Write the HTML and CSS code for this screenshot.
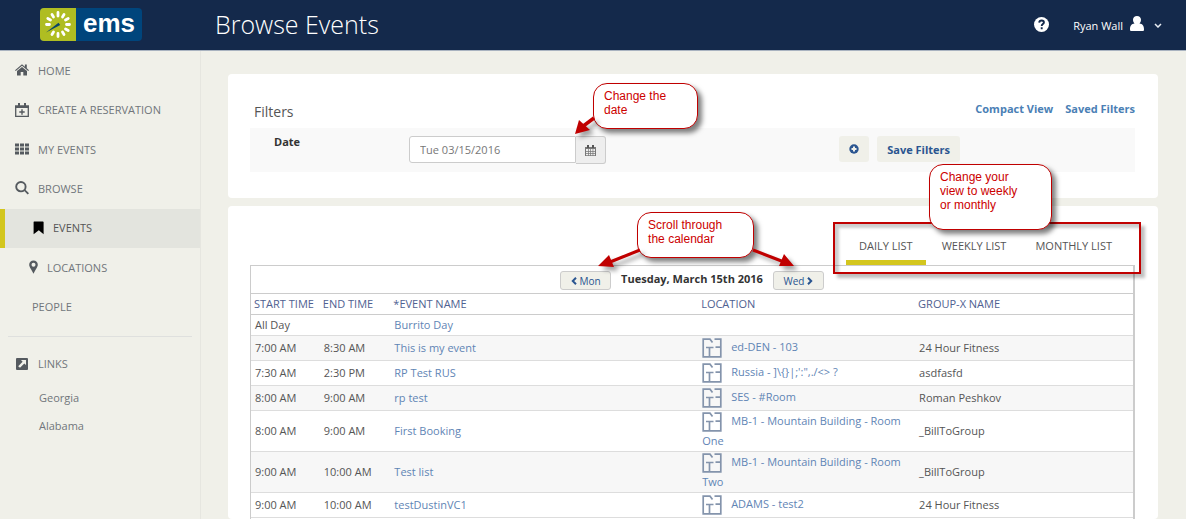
FILE: index.html
```html
<!DOCTYPE html>
<html lang="en">
<head>
<meta charset="utf-8">
<title>Browse Events</title>
<link rel="stylesheet" href="styles.css">
</head>
<body>
<svg class="defs" aria-hidden="true">
  <symbol id="plan" viewBox="0 0 20 20"><path d="M10.500 4.500L8 1.200H1.200V18.800H18.800V1.200H12.500M4 9.500H11.500M7.500 9.500V18.800M13.500 9.200H18.800" fill="none" stroke="#8494ac" stroke-width="1.700"/></symbol>
</svg>
<header class="topbar">
  <div class="logo">
    <svg class="logo-mark" viewBox="0 0 36 33" aria-hidden="true">
      <g stroke="#fff" stroke-width="2.800" stroke-linecap="round">
        <path d="M18 4.500V8M18 25.500V28.500M6.500 16.500H9.500M26.500 16.500H29.500M12 6.500L13.500 9M24 6.500L22.500 9M12 26.500L13.500 24M24 26.500L22.500 24M7.800 10.500L10.500 12M28.200 10.500L25.500 12M28.200 22.500L25.500 21"/>
      </g>
      <path d="M6 24.500L18.500 14.800L20.200 17Z" fill="#0a4468"/>
    </svg>
    <span class="logo-text">ems</span>
  </div>
  <h1 class="title">Browse Events</h1>
  <div class="account">
    <button class="plain" aria-label="Help">
      <svg width="15" height="15" viewBox="0 0 15 15"><circle cx="7.500" cy="7.500" r="7.500" fill="#fff"/><path d="M5.200 5.600C5.300 4.100 6.300 3.500 7.600 3.500C9 3.500 9.900 4.300 9.900 5.400C9.900 7 7.700 7 7.700 8.900M7.700 10.200V12.200" fill="none" stroke="#14294b" stroke-width="1.900"/></svg>
    </button>
    <button class="plain user">Ryan Wall
      <svg class="person" width="14" height="15" viewBox="0 0 14 15"><path d="M3 3.800C3 1.500 4.700 0 7 0S11 1.500 11 3.800C11 5.500 10.200 6.900 9.500 7.500C12.500 8 14 9.500 14 13.500C14 14.500 13.500 15 12.500 15H1.500C.5 15 0 14.500 0 13.500C0 9.500 1.500 8 4.500 7.500C3.800 6.900 3 5.500 3 3.800Z" fill="#fff"/></svg>
      <svg class="caret" width="8" height="5" viewBox="0 0 8 5"><path d="M1 1L4 4L7 1" fill="none" stroke="#e8ecf2" stroke-width="1.500"/></svg>
    </button>
  </div>
</header>
<div class="shell">
  <nav class="sidebar">
    <ul class="menu">
      <li><a href="#"><svg class="ico" viewBox="0 0 14 14"><path d="M7 1.200L0 7.200L.8 8L7 2.800L13.200 8L14 7.200L11.800 5.300V1.600H9.900V3.700ZM2 8V12.600H5.700V9H8.300V12.600H12V8L7 3.900Z"/></svg>HOME</a></li>
      <li><a href="#"><svg class="ico" viewBox="0 0 14 14"><path d="M.7 3.200H13.300V13.300H.7Z" fill="none" stroke="#555a5f" stroke-width="1.300"/><path d="M0 2.500H14V5H0ZM3 0H5V3H3ZM9 0H11V3H9ZM4.300 8.300H9.700V9.700H4.300ZM6.300 6.300H7.700V11.700H6.300Z"/></svg>CREATE A RESERVATION</a></li>
      <li><a href="#"><svg class="ico" viewBox="0 0 14 14"><path d="M0 1.500H4V4.500H0ZM5 1.500H9V4.500H5ZM10 1.500H14V4.500H10ZM0 5.500H4V8.500H0ZM5 5.500H9V8.500H5ZM10 5.500H14V8.500H10ZM0 9.500H4V12.500H0ZM5 9.500H9V12.500H5ZM10 9.500H14V12.500H10Z"/></svg>MY EVENTS</a></li>
      <li><a href="#"><svg class="ico" viewBox="0 0 14 14"><circle cx="5.900" cy="5.700" r="4.700" fill="none" stroke="#555a5f" stroke-width="1.900"/><path d="M9 9.800L10.200 8.600L14 12.200L12.700 13.500Z"/></svg>BROWSE</a></li>
      <li class="sub active"><a href="#"><svg class="ico ico-sm" viewBox="0 0 11 14"><path d="M1 .5H10L10.600 1V13.200L5.800 9.200L.6 13.200V1Z"/></svg>EVENTS</a></li>
      <li class="sub pin"><a href="#"><svg class="ico ico-xs" viewBox="0 0 9 14"><path d="M4.500 .5C2 .5 .2 2.300 .2 4.800C.2 6.500 1 7.200 4.500 13.700C8 7.200 8.800 6.500 8.800 4.800C8.800 2.300 7 .5 4.500 .5ZM4.500 2.700A2 2 0 1 1 4.500 6.700A2 2 0 1 1 4.500 2.700Z" fill-rule="evenodd"/></svg>LOCATIONS</a></li>
      <li class="sub"><a href="#">PEOPLE</a></li>
    </ul>
    <div class="links">
      <h2 class="links-head"><svg class="ico" viewBox="0 0 14 14"><path d="M2 1H12Q13 1 13 2V12Q13 13 12 13H2Q1 13 1 12V2Q1 1 2 1Z"/><path d="M6 3H11V8L9.300 6.400L5 10.800L3.200 9.200L7.600 4.700Z" fill="#f0f0e9"/></svg>LINKS</h2>
      <a href="#">Georgia</a>
      <a href="#">Alabama</a>
    </div>
  </nav>
  <main class="content">
    <section class="card filters">
      <div class="filters-head">
        <h2>Filters</h2>
        <div class="views"><a href="#">Compact View</a><a href="#">Saved Filters</a></div>
      </div>
      <div class="filter-row">
        <label for="date">Date</label>
        <div class="date-group">
          <input id="date" type="text" value="Tue 03/15/2016">
          <button class="cal" aria-label="Pick a date"><svg width="11" height="11" viewBox="0 0 11 11"><path d="M0 2H11V11H0Z" fill="#777"/><path d="M2 0H4V3H2ZM7 0H9V3H7Z" fill="#555"/><path d="M1 4H3V6H1ZM3.700 4H5.300V6H3.700ZM6 4H7.600V6H6ZM8.300 4H10V6H8.300ZM1 6.700H3V8.200H1ZM3.700 6.700H5.300V8.200H3.700ZM6 6.700H7.600V8.200H6ZM8.300 6.700H10V8.200H8.300ZM1 9H3V10.200H1ZM3.700 9H5.300V10.200H3.700ZM6 9H7.600V10.200H6ZM8.300 9H10V10.200H8.300Z" fill="#eee"/></svg></button>
          <svg class="arrow date-arrow" viewBox="0 0 30 30"><path d="M24 9L12 18" stroke="#c00000" stroke-width="3.500"/><path d="M5 25L9 11L20 21Z" fill="#c00000"/></svg>
          <div class="callout date-note">Change the<br>date</div>
        </div>
        <div class="actions">
          <button class="btn" aria-label="Add filter"><svg width="10" height="10" viewBox="0 0 10 10"><circle cx="5" cy="5" r="4.700" fill="#2a5590"/><path d="M5 2.500V7.500M2.500 5H7.500" stroke="#f0f0e9" stroke-width="2"/></svg></button>
          <button class="btn">Save Filters</button>
        </div>
      </div>
    </section>
    <section class="card results">
      <div class="tabs" role="tablist">
        <button class="tab on" role="tab" aria-selected="true">DAILY LIST</button>
        <button class="tab" role="tab">WEEKLY LIST</button>
        <button class="tab" role="tab">MONTHLY LIST</button>
        <div class="frame"></div>
        <div class="callout view-note">Change your<br>view to weekly<br>or monthly</div>
      </div>
      <div class="grid-box">
        <div class="pager-bar">
          <div class="pager">
            <button class="day"><svg width="6" height="8" viewBox="0 0 6 8"><path d="M5 .8L1.800 4L5 7.200" fill="none" stroke="#2a5590" stroke-width="2"/></svg>Mon</button>
            <strong>Tuesday, March 15th 2016</strong>
            <button class="day">Wed<svg width="6" height="8" viewBox="0 0 6 8"><path d="M1 .8L4.200 4L1 7.200" fill="none" stroke="#2a5590" stroke-width="2"/></svg></button>
            <svg class="arrow pager-arrows" viewBox="0 0 266 70"><path d="M80 45L50 57M193 45L224 57" stroke="#c00000" stroke-width="3"/><path d="M38 61L49 50L54 62ZM234 61L224 49L219 61Z" fill="#c00000"/></svg>
            <div class="callout pager-note">Scroll through<br>the calendar</div>
          </div>
        </div>
        <table class="events">
          <colgroup><col class="c-start"><col class="c-end"><col class="c-event"><col class="c-loc"><col class="c-group"></colgroup>
          <thead><tr><th>START TIME</th><th>END TIME</th><th>*EVENT NAME</th><th>LOCATION</th><th>GROUP-X NAME</th></tr></thead>
          <tbody>
            <tr class="allday"><td>All Day</td><td></td><td><a href="#">Burrito Day</a></td><td></td><td></td></tr>
            <tr><td>7:00 AM</td><td>8:30 AM</td><td><a href="#">This is my event</a></td><td class="loc"><svg class="plan"><use href="#plan"/></svg><a href="#">ed-DEN - 103</a></td><td>24 Hour Fitness</td></tr>
            <tr><td>7:30 AM</td><td>2:30 PM</td><td><a href="#">RP Test RUS</a></td><td class="loc"><svg class="plan"><use href="#plan"/></svg><a href="#">Russia - ]\{}|;':",./&lt;&gt; ?</a></td><td>asdfasfd</td></tr>
            <tr><td>8:00 AM</td><td>9:00 AM</td><td><a href="#">rp test</a></td><td class="loc"><svg class="plan"><use href="#plan"/></svg><a href="#">SES - #Room</a></td><td>Roman Peshkov</td></tr>
            <tr><td>8:00 AM</td><td>9:00 AM</td><td><a href="#">First Booking</a></td><td class="loc"><svg class="plan"><use href="#plan"/></svg><a href="#">MB-1 - Mountain Building - Room One</a></td><td>_BillToGroup</td></tr>
            <tr><td>9:00 AM</td><td>10:00 AM</td><td><a href="#">Test list</a></td><td class="loc"><svg class="plan"><use href="#plan"/></svg><a href="#">MB-1 - Mountain Building - Room Two</a></td><td>_BillToGroup</td></tr>
            <tr><td>9:00 AM</td><td>10:00 AM</td><td><a href="#">testDustinVC1</a></td><td class="loc"><svg class="plan"><use href="#plan"/></svg><a href="#">ADAMS - test2</a></td><td>24 Hour Fitness</td></tr>
          </tbody>
        </table>
      </div>
    </section>
  </main>
</div>
</body>
</html>
```
FILE: styles.css
```css
* { box-sizing: border-box; }
body {
  margin: 0;
  min-height: 100vh;
  display: flex;
  flex-direction: column;
  background: #f0f0e9;
  color: #555;
  font-family: "Open Sans", "Noto Sans", sans-serif;
  font-size: 11px;
}
button, input { font: inherit; color: inherit; margin: 0; }
button { cursor: pointer; }
a { text-decoration: none; color: inherit; }
h1, h2, ul { margin: 0; padding: 0; font-weight: 400; list-style: none; }
.defs { position: absolute; width: 0; height: 0; }

.topbar {
  display: flex;
  align-items: center;
  height: 51px;
  padding: 0 24px 1px 40px;
  background: #14294b;
  border-bottom: 1px solid #a9b3c0;
  color: #fff;
}
.logo {
  display: flex;
  width: 102px;
  height: 33px;
  margin-right: 73px;
  border-radius: 4px;
  overflow: hidden;
  background: #00457c;
}
.logo-mark { width: 36px; height: 33px; background: #afbd22; }
.logo-text {
  flex: 1;
  text-align: center;
  font: bold 26px/31px "Liberation Sans", Arial, sans-serif;
}
.title { font-size: 25px; font-weight: 300; line-height: 33px; }
.account { display: flex; align-items: center; gap: 24px; margin-left: auto; }
.plain { display: flex; align-items: center; padding: 0; border: 0; background: none; color: #fff; }
.user { gap: 7px; padding-top: 1px; }
.person { margin-bottom: 3px; }
.caret { margin-left: 3px; }

.shell { flex: 1; display: flex; }
.sidebar { flex: 0 0 201px; border-right: 1px solid #e6e6e0; color: #71767b; }
.menu { display: grid; grid-auto-rows: 1fr; height: 276px; }
.menu a { display: flex; align-items: center; height: 100%; padding: 0 0 1px 15px; }
.ico { width: 14px; height: 14px; margin-right: 9px; fill: #555a5f; }
.ico-sm { width: 11px; }
.ico-xs { width: 9px; }
.menu .sub a { padding-left: 32px; }
.menu .pin a { padding-left: 29px; }
.menu .active { background: #e3e4de; border-left: 5px solid #d3c61e; color: #555; }
.menu .active a { padding-left: 28px; }
.active .ico { fill: #000; }
.links {
  display: flex;
  flex-direction: column;
  gap: 12px;
  margin: 9px 8px 0;
  padding: 19px 7px 0;
  border-top: 1px solid #dfe0de;
  line-height: 16px;
}
.links-head { display: flex; align-items: center; margin-bottom: 6px; font-size: 11px; }
.links a { padding-left: 24px; }

.content { flex: 1; min-width: 0; display: flex; flex-direction: column; gap: 8px; padding: 23px 28px 0 27px; }
.card { background: #fff; border-radius: 4px; padding: 0 23px 0 22px; }
.filters { padding-top: 20px; padding-bottom: 26px; }
.filters-head { display: flex; justify-content: space-between; align-items: center; height: 34px; padding-left: 4px; }
.filters-head h2 { font-size: 14px; }
.views { display: flex; gap: 12px; margin-top: -6px; color: #4a80b5; font-weight: 700; }
.filter-row { display: flex; background: #f9f9f9; height: 44px; padding: 8px 175px 0 24px; }
.filter-row label { width: 135px; color: #333; font-weight: 700; line-height: 12px; }
.date-group { position: relative; display: flex; width: 197px; height: 28px; }
.date-group input {
  width: 167px;
  height: 27px;
  padding: 0 10px;
  border: 1px solid #ccc;
  border-radius: 3px 0 0 3px;
  background: #fff;
  color: #777;
}
.cal {
  flex: 1;
  display: grid;
  place-items: center;
  padding: 0;
  border: 1px solid #ccc;
  border-left: 0;
  border-radius: 0 3px 3px 0;
  background: #eee;
}
.actions { display: flex; gap: 8px; margin-left: auto; }
.btn {
  display: grid;
  place-items: center;
  height: 26px;
  padding: 0 10px;
  border: 0;
  border-radius: 3px;
  background: #f0f0e9;
  color: #2a5590;
  font-weight: 700;
}

.results { flex: 1; display: flex; flex-direction: column; padding-top: 20px; }
.tabs { position: relative; display: flex; gap: 3px; align-self: flex-end; margin-right: 10px; height: 39px; }
.tab { padding: 5px 13px 0; border: 0; border-bottom: 5px solid transparent; background: none; }
.tab.on { border-color: #d3c61e; }
.grid-box { flex: 1; border: 1px solid #ccc; border-width: 1px 2px 0 1px; }
.pager-bar { display: flex; justify-content: center; height: 27px; padding-top: 5px; }
.pager { position: relative; display: flex; gap: 10px; }
.pager strong { color: #333; font-weight: 700; line-height: 16px; }
.day {
  display: flex;
  align-items: center;
  justify-content: center;
  gap: 3px;
  width: 51px;
  height: 19px;
  padding: 0;
  border: 1px solid #ccc;
  border-radius: 3px;
  background: #f0f0e9;
  color: #2a5590;
  font-size: 10px;
}
.events { width: 100%; table-layout: fixed; border-collapse: collapse; line-height: 16px; border-top: 1px solid #ccc; }
.c-start { width: 7.8%; }
.c-end { width: 8%; }
.c-event { width: 34.9%; }
.c-loc { width: 24.6%; }
.events th { height: 21px; padding: 0 3px; border-bottom: 1px solid #ccc; color: #4f6191; font-weight: 400; text-align: left; white-space: nowrap; }
.events td { height: 25px; padding: 0 4px; border-bottom: 1px solid #ddd; }
.events .allday td { height: 21px; }
.events tbody tr:nth-child(even) { background: #f7f7f7; }
.events a { color: #5f85b5; }
.events .loc { padding: 1px 4px; line-height: 18px; }
.plan { width: 20px; height: 20px; margin-right: 9px; vertical-align: -7px; }

.callout {
  position: absolute;
  z-index: 2;
  padding: 5px 10px;
  border: 1px solid #c00000;
  border-radius: 14px;
  background: #fff;
  box-shadow: 4px 4px 5px rgba(0, 0, 0, .5);
  color: #c00;
  font: 12px/14px "Liberation Sans", Arial, sans-serif;
  white-space: nowrap;
}
.arrow { position: absolute; z-index: 3; overflow: visible; pointer-events: none; filter: drop-shadow(4px 4px 2px rgba(0, 0, 0, .35)); }
.date-note { left: 184px; top: -53px; width: 105px; height: 46px; }
.date-arrow { left: 161px; top: -27px; width: 30px; height: 30px; }
.pager-note { left: 77px; top: -59px; width: 117px; height: 46px; }
.pager-arrows { left: 0; top: -66px; width: 266px; height: 70px; }
.frame { position: absolute; z-index: 1; inset: -4px -16px -9px -13px; border: 2px solid #c00000; box-shadow: 4px 4px 3px rgba(0, 0, 0, .25), inset 4px 4px 3px rgba(0, 0, 0, .2); pointer-events: none; }
.view-note { left: 83px; top: -62px; width: 123px; height: 66px; }
```
